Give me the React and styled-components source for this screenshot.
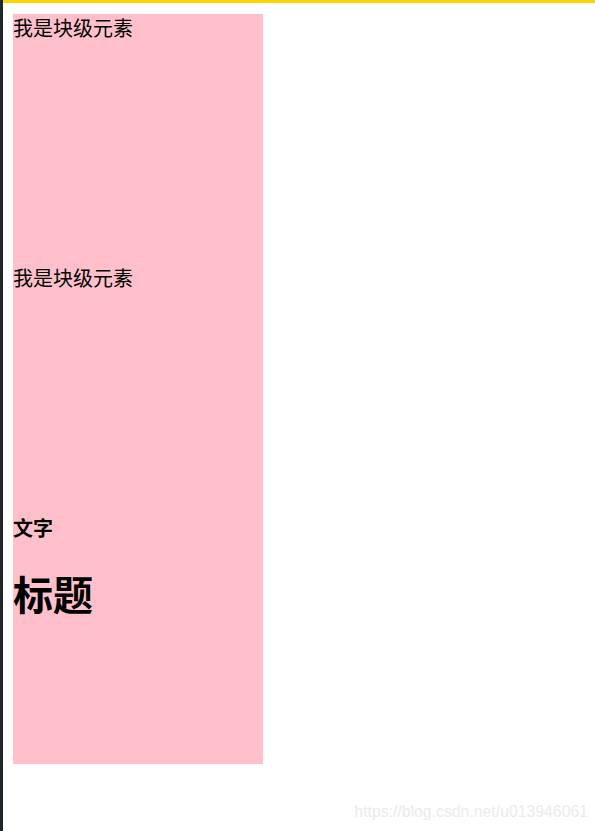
import React from "react";
import styled, { createGlobalStyle } from "styled-components";

const GlobalStyle = createGlobalStyle`
  html, body { margin: 0; padding: 0; background: #ffffff; }
  body { font-family: "Noto Sans CJK SC", "Microsoft YaHei", sans-serif; }
`;

const Frame = styled.div`
  display: flex;
  min-height: 831px;
  position: relative;
  overflow: hidden;
`;

const SideStrip = styled.div`
  width: 3px;
  flex: 0 0 3px;
  background: #1f272b;
`;

const Main = styled.div`
  flex: 1;
  display: flex;
  flex-direction: column;
`;

const TopBar = styled.div`
  height: 3px;
  background: #fdd400;
`;

const Content = styled.div`
  padding: 11px 0 0 10px;
  display: flex;
  flex-direction: column;
`;

const Block = styled.div`
  width: 250px;
  height: 250px;
  background: pink;
  color: #000;
  font-size: 20px;
  line-height: 28px;
  display: flow-root;
`;

const Label = styled.div`
  font-size: 20px;
  line-height: 28px;
`;

const SubTitle = styled.h4`
  margin: 0 0 25px;
  font-size: 20px;
  line-height: 28px;
  font-weight: 700;
`;

const Title = styled.h1`
  margin: 0;
  font-size: 40px;
  line-height: 52px;
  font-weight: 700;
`;

const Watermark = styled.div`
  position: absolute;
  right: 7px;
  top: 803px;
  font-family: "Liberation Sans", Arial, sans-serif;
  font-size: 15.8px;
  line-height: 18px;
  color: #ebebeb;
  white-space: nowrap;
`;

export default function App() {
  return (
    <>
      <GlobalStyle />
      <Frame>
        <SideStrip />
        <Main>
          <TopBar />
          <Content>
            <Block>
              <Label>我是块级元素</Label>
            </Block>
            <Block>
              <Label>我是块级元素</Label>
            </Block>
            <Block>
              <SubTitle>文字</SubTitle>
              <Title>标题</Title>
            </Block>
          </Content>
        </Main>
        <Watermark>https://blog.csdn.net/u013946061</Watermark>
      </Frame>
    </>
  );
}
